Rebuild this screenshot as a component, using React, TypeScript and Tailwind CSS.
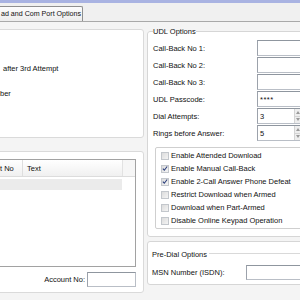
import React from "react";

const FONT = "font-['Liberation_Sans',Arial,sans-serif]";

const UDL_ROWS = [
  { label: "Call-Back No 1:", value: "" },
  { label: "Call-Back No 2:", value: "" },
  { label: "Call-Back No 3:", value: "" },
];

const OPTIONS = [
  { label: "Enable Attended Download", checked: false },
  { label: "Enable Manual Call-Back", checked: true },
  { label: "Enable 2-Call Answer Phone Defeat", checked: true },
  { label: "Restrict Download when Armed", checked: false },
  { label: "Download when Part-Armed", checked: false },
  { label: "Disable Online Keypad Operation", checked: false },
];

function TextBox({ value, className = "" }: { value?: string; className?: string }) {
  return (
    <div
      className={
        "flex items-center bg-white border border-[#b9bec6] border-t-[#8f969f] border-l-[#9ca2ab] pl-[2px] " +
        className
      }
    >
      {value}
    </div>
  );
}

function Spin({ value }: { value: string }) {
  return (
    <div className="flex h-[16px] w-[50px] bg-white border border-[#b9bec6] border-t-[#8f969f] border-l-[#9ca2ab]">
      <div className="flex-1 flex items-center pl-[2px]">{value}</div>
      <div className="w-[6px] flex flex-col border-l border-[#d4d4d4] bg-[#eeeeee] mr-[6px]">
        <div className="flex-1 flex items-center justify-center">
          <svg width="4" height="3" viewBox="0 0 4 3"><path d="M0 3L2 0L4 3Z" fill="#9a9a9a" /></svg>
        </div>
        <div className="flex-1 flex items-center justify-center border-t border-[#d4d4d4]">
          <svg width="4" height="3" viewBox="0 0 4 3"><path d="M0 0L2 3L4 0Z" fill="#9a9a9a" /></svg>
        </div>
      </div>
    </div>
  );
}

function Check({ checked }: { checked: boolean }) {
  return (
    <div className="w-[8px] h-[8px] border border-[#c3c7cc] bg-gradient-to-br from-[#dcdcdc] to-[#f4f4f4] flex items-center justify-center">
      {checked && (
        <svg width="7" height="7" viewBox="0 0 7 7">
          <path d="M1 3.6L2.7 5.5L6 1.2" fill="none" stroke="#2c3f7c" strokeWidth="1.3" />
        </svg>
      )}
    </div>
  );
}

export default function App() {
  return (
    <div className={"w-[300px] h-[300px] overflow-hidden bg-[#f4f4f4] text-[7.5px] leading-[9px] text-[#111111] " + FONT}>
      <div className="h-[3px] bg-[#a9b3e2]" />
      <div className="h-[19px] flex items-end border-b border-[#a9a9a9] bg-[#f0f0f0]">
        <div className="ml-[-3px] pl-[3px] pr-[1px] h-[15px] flex items-center border border-b-0 border-[#8f8f8f] rounded-t-[2px] bg-gradient-to-b from-[#fdfdfd] to-[#ececec] whitespace-nowrap text-[7.1px]">
          ad and Com Port Options
        </div>
      </div>

      <div className="flex">
        {/* left column */}
        <div className="ml-[-8px] w-[152px] shrink-0 flex flex-col pt-[7px]">
          <div className="h-[109px] border border-[#dadada] rounded-[3px] bg-white flex flex-col">
            <div className="mt-[34px] ml-[10px] whitespace-nowrap">after 3rd Attempt</div>
            <div className="mt-[16px] ml-[7px] whitespace-nowrap">ber</div>
          </div>
          <div className="mt-[13px] h-[142px] border border-[#dadada] rounded-[3px] bg-white flex flex-col pt-[7px]">
            <div className="ml-[-1px] mr-[7px] h-[108px] border border-[#a2a2a2] bg-white flex flex-col">
              <div className="h-[17px] flex border-b border-[#dcdcdc] bg-gradient-to-b from-[#ffffff] to-[#f0f0f0]">
                <div className="w-[30px] flex items-center pl-[7px] border-r border-[#dedede]">t No</div>
                <div className="w-[99px] flex items-center pl-[4px]">Text</div>
                <div className="flex-1 border-l border-[#e2e2e2] bg-[#f6f6f6]" />
              </div>
              <div className="mt-[2px] h-[11px] w-[129px] bg-[#ebebeb]" />
            </div>
            <div className="mt-[5px] flex items-center justify-end gap-[2px] pr-[7px]">
              <span>Account No:</span>
              <TextBox className="w-[49px] h-[15px]" />
            </div>
          </div>
        </div>

        {/* right column */}
        <div className="ml-[3px] w-[160px] shrink-0 flex flex-col">
          <fieldset className="mt-[5px] border border-[#d6d6d6] rounded-[3px] bg-white pb-[7px]">
            <legend className="ml-[5px] px-0">UDL Options</legend>
            <div className="flex flex-col gap-[1px] mt-[4px] pl-[5px]">
              {UDL_ROWS.map((r) => (
                <div key={r.label} className="h-[16px] flex items-center">
                  <span className="w-[104px]">{r.label}</span>
                  <TextBox className="w-[50px] h-[16px]" value={r.value} />
                </div>
              ))}
              <div className="h-[16px] flex items-center">
                <span className="w-[104px]">UDL Passcode:</span>
                <TextBox className="w-[50px] h-[16px] tracking-[0.5px]" value="****" />
              </div>
              <div className="h-[16px] flex items-center">
                <span className="w-[104px]">Dial Attempts:</span>
                <Spin value="3" />
              </div>
              <div className="h-[16px] flex items-center">
                <span className="w-[104px]">Rings before Answer:</span>
                <Spin value="5" />
              </div>
            </div>
            <div className="mt-[6px] ml-[7px] border border-[#cfcfcf] rounded-[2px] pt-[1px] pb-[1px] flex flex-col">
              {OPTIONS.map((o) => (
                <div key={o.label} className="h-[13px] flex items-center gap-[2px] pl-[5px] whitespace-nowrap">
                  <Check checked={o.checked} />
                  <span>{o.label}</span>
                </div>
              ))}
            </div>
          </fieldset>

          <div className="mt-[4px] h-[44px] border border-[#d6d6d6] rounded-[3px] bg-white flex flex-col pl-[4px]">
            <div className="mt-[8px] flex items-center gap-[2px]">
              <span className="whitespace-nowrap">Pre-Dial Options</span>
              <div className="flex-1 h-px bg-[#d9d9d9] mt-[-3px]" />
            </div>
            <div className="mt-[6px] flex items-center">
              <span className="w-[95px] whitespace-nowrap">MSN Number (ISDN):</span>
              <TextBox className="w-[60px] h-[15px]" />
            </div>
          </div>
        </div>
      </div>
    </div>
  );
}
